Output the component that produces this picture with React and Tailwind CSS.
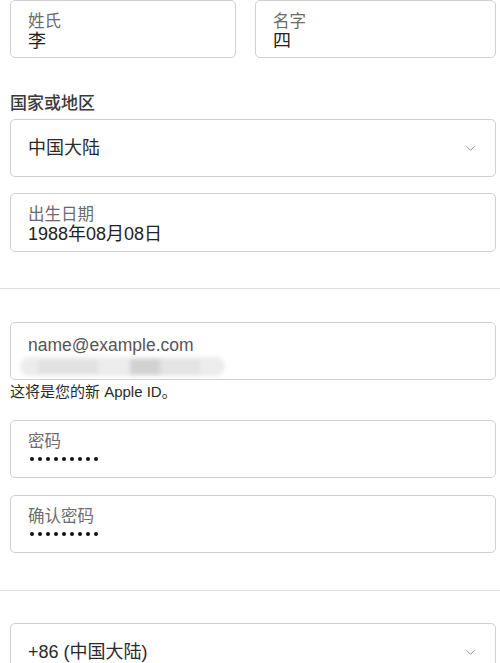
import React from "react";
import { ChevronDown } from "lucide-react";

const font = {
  fontFamily: '"Liberation Sans", "Noto Sans CJK SC", sans-serif',
};

const Feld = ({ label, children, className = "" }) => (
  <div
    className={`h-[58px] rounded-[5px] border border-[#d0d0d0] bg-white pl-[17px] pt-[11px] ${className}`}
  >
    <div className="text-[16.5px] leading-[19px] text-[#6b6b6b]">{label}</div>
    {children}
  </div>
);

const Wert = ({ children }) => (
  <div className="text-[18px] leading-[20px] text-[#222]">{children}</div>
);

const Auswahl = ({ value, className = "" }) => (
  <div
    className={`flex h-[58px] items-center justify-between rounded-[5px] border border-[#d0d0d0] bg-white pl-[17px] pr-[17px] ${className}`}
  >
    <span className="text-[18px] leading-[20px] text-[#2a2a2a]">{value}</span>
    <ChevronDown size={15} strokeWidth={1.5} className="text-[#8a8a8a]" />
  </div>
);

const Punkte = () => (
  <div className="mt-[6px] flex gap-[4px] pl-[2px]">
    {Array.from({ length: 9 }).map((_, i) => (
      <span key={i} className="h-[4px] w-[4px] rounded-full bg-[#111]" />
    ))}
  </div>
);

export default function App() {
  return (
    <div
      className="h-[663px] w-[500px] overflow-hidden bg-white pl-[10px] pr-[4px]"
      style={font}
    >
      <div className="flex gap-[19px]">
        <Feld label="姓氏" className="w-[226px]">
          <Wert>李</Wert>
        </Feld>
        <Feld label="名字" className="w-[241px]">
          <Wert>四</Wert>
        </Feld>
      </div>

      <div className="mt-[36px] text-[17px] font-medium leading-[20px] text-[#3a3a3a]">
        国家或地区
      </div>
      <Auswahl value="中国大陆" className="mt-[5px]" />

      <Feld label="出生日期" className="mt-[16px] h-[59px]">
        <Wert>1988年08月08日</Wert>
      </Feld>

      <div className="-ml-[10px] -mr-[4px] mt-[36px] border-t border-[#dedede]" />

      <div className="mt-[33px] h-[58px] rounded-[5px] border border-[#d0d0d0] bg-white pl-[17px] pt-[12px]">
        <div className="text-[17.5px] leading-[20px] text-[#555]">
          name@example.com
        </div>
        <div className="-ml-[8px] mt-[2px] flex h-[19px] w-[205px] items-center rounded-full bg-[#ececec] blur-[2px]">
          <span className="ml-[18px] h-[14px] w-[60px] bg-[#e2e2e2]" />
          <span className="ml-[32px] h-[16px] w-[30px] bg-[#d2d2d2]" />
          <span className="h-[16px] w-[40px] bg-[#e4e4e4]" />
        </div>
      </div>
      <div className="mt-[2px] text-[15px] leading-[20px] text-[#2a2a2a]">
        这将是您的新 Apple ID。
      </div>

      <Feld label="密码" className="mt-[18px]">
        <Punkte />
      </Feld>
      <Feld label="确认密码" className="mt-[17px]">
        <Punkte />
      </Feld>

      <div className="-ml-[10px] -mr-[4px] mt-[37px] border-t border-[#dedede]" />

      <Auswahl value="+86 (中国大陆)" className="mt-[32px]" />
    </div>
  );
}
